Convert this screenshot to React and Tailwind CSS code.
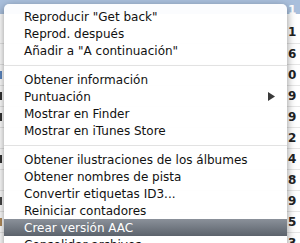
const rows = [
    { digit: '6', mark: '' },
    { digit: '0', mark: 'bg-[#5b86c0]' },
    { digit: '9', mark: 'bg-[#333]' },
    { digit: '9', mark: 'bg-[#333]' },
    { digit: '2', mark: '' },
    { digit: '4', mark: 'bg-[#333]' },
    { digit: '8', mark: '' },
    { digit: '9', mark: 'bg-[#444]' },
    { digit: '5', mark: 'bg-[#b08a5a]' },
    { digit: '3', mark: '' },
]

const items = [
    ['Reproducir "Get back"', 'Reprod. después', 'Añadir a "A continuación"'],
    ['Obtener información', 'Puntuación', 'Mostrar en Finder', 'Mostrar en iTunes Store'],
    [
        'Obtener ilustraciones de los álbumes',
        'Obtener nombres de pista',
        'Convertir etiquetas ID3...',
        'Reiniciar contadores',
        'Crear versión AAC',
        'Consolidar archivos',
    ],
]

function MenuItem({ label }) {
    const active = label === 'Crear versión AAC'
    return (
        <div
            className={
                active
                    ? 'flex h-[17px] items-center justify-between bg-gradient-to-b from-[#8b919a] to-[#5c636c] px-[20px] text-white'
                    : 'flex h-[17px] items-center justify-between px-[20px] text-[#111]'
            }
        >
            <span className="whitespace-nowrap">{label}</span>
            {label === 'Puntuación' && (
                <svg width="7" height="9" viewBox="0 0 7 9" className="-mr-[8px]">
                    <path d="M0 0 L7 4.5 L0 9 Z" fill="#3a3a3a" />
                </svg>
            )}
        </div>
    )
}

export default function App() {
    return (
        <div className="relative h-[243px] w-[300px] overflow-hidden bg-white font-['DejaVu_Sans',sans-serif]">
            {/* list behind the menu */}
            <div className="flex flex-col text-[12px] font-bold leading-[14px]">
                <div className="flex h-[14px] items-start justify-end bg-[#a9bfdc] pt-[3px] text-white">
                    <span className="w-[13px] pl-[1px]">1</span>
                </div>
                <div className="flex h-[29px] items-end justify-end pb-[4px] text-[#222]">
                    <span className="w-[13px] pl-[1px]">1</span>
                </div>
                {rows.map((r, i) => (
                    <div key={i} className="flex h-[21px] items-center justify-between border-t border-[#e6e6e6] text-[#222]">
                        <span className={`h-[8px] w-[2px] ${r.mark}`} />
                        <span className="w-[13px] pl-[1px]">{r.digit}</span>
                    </div>
                ))}
            </div>

            {/* context menu */}
            <div className="absolute left-[4px] top-[4px] w-[283px] rounded-t-[5px] bg-white/95 pt-[4px] text-[12px] shadow-[0_3px_9px_rgba(0,0,0,0.45)]">
                {items.map((group, gi) => (
                    <div key={gi}>
                        {gi > 0 && (
                            <div className="flex h-[12px] items-center">
                                <div className="h-px w-full bg-[#e2e2e2]" />
                            </div>
                        )}
                        {group.map((label) => (
                            <MenuItem key={label} label={label} />
                        ))}
                    </div>
                ))}
            </div>
        </div>
    )
}
